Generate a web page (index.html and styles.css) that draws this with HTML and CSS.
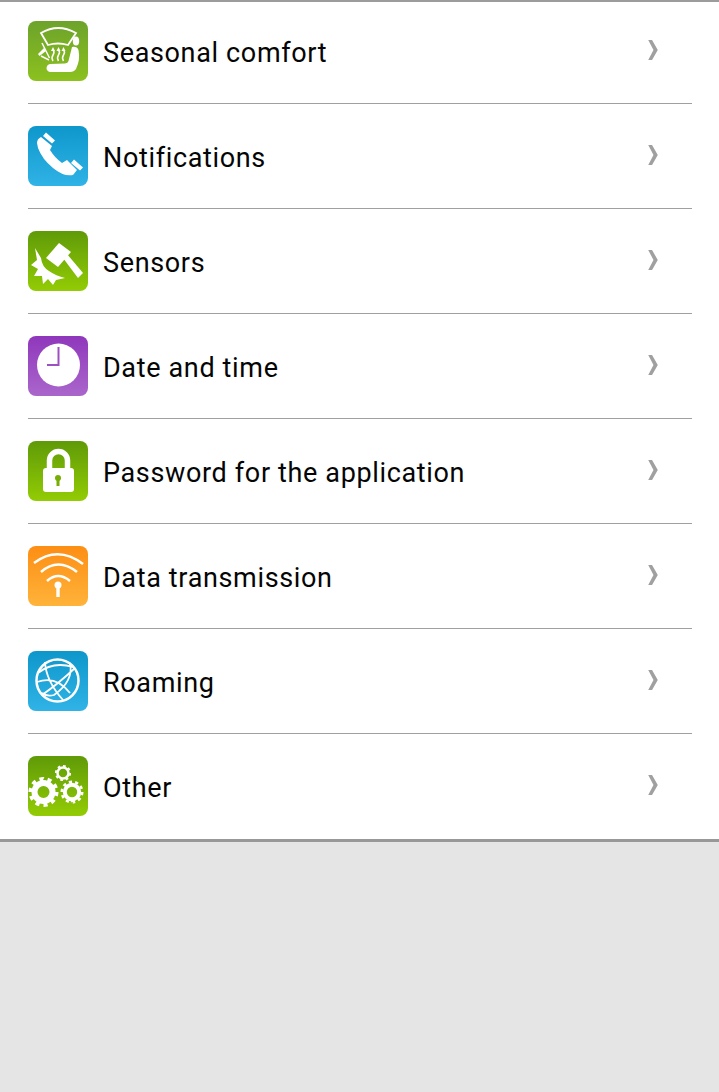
FILE: index.html
```html
<!DOCTYPE html>
<html lang="en">
<head>
<meta charset="utf-8">
<title>Settings</title>
<link rel="stylesheet" href="styles.css">
</head>
<body>
<ul class="menu">
  <li class="row">
    <span class="tile tile-green">
      <svg viewBox="0 0 60 60" class="icon">
        <path class="line-slim" d="M13 12Q30 2 48 12L40 24Q30 21 20 24Z"/>
        <ellipse class="fill" cx="48" cy="20" rx="3.200" ry="4.500"/>
        <path class="fill" d="M44 26Q49 25 50.500 29Q52.500 39 48 48Q46 51 42 51L22 51Q18.500 50 18.500 47Q19 43.500 22 43L37 42.500Q40 42 40.500 40Z"/>
        <path class="thin" d="M14 22L21.500 37M13 35L21 39"/>
        <path class="fill" d="M10 33L16 27L18 30L11.500 35Z"/>
        <path class="thin" d="M25 40Q23 37 25 34T25 29M30.500 40Q28.500 37 30.500 34T30.500 29M35.500 40Q33.500 37 35.500 34T35.500 29"/>
        <path class="fill" d="M23 30L25 26L27 30ZM28.500 30L30.500 26L32.500 30ZM33.500 30L35.500 26L37.500 30Z"/>
      </svg>
    </span>
    <span class="label">Seasonal comfort</span>
    <svg viewBox="0 0 12 22" class="chevron"><path d="M1 0H5L11 10.500L5 21H1L6.500 10.500Z"/></svg>
  </li>
  <li class="row">
    <span class="tile tile-blue">
      <svg viewBox="0 0 60 60" class="icon">
        <path class="fill" d="M9 17Q9 13 13 11L24 20L22 24Q27 32 34 37L39 34L49 44L45 49Q36 51 25 42Q14 33 10 22Z"/>
        <path class="fill" d="M15 10L18 6.500L27 14.500L24 17.500ZM43 37L46 33.500L55 41.500L52 44.500Z"/>
      </svg>
    </span>
    <span class="label">Notifications</span>
    <svg viewBox="0 0 12 22" class="chevron"><path d="M1 0H5L11 10.500L5 21H1L6.500 10.500Z"/></svg>
  </li>
  <li class="row">
    <span class="tile tile-lime">
      <svg viewBox="0 0 60 60" class="icon">
        <path class="fill" d="M31 12L43 21L30 36L18 27Z"/>
        <path class="fill" d="M35 27L39 23L55 42L50 47Z"/>
        <path class="fill" d="M7 17L13 27Q14 36 21 40Q28 45 37 47L28 49L25 54L20 48L15 53L14 45L6 45L10 38L3 34L9 29Z"/>
      </svg>
    </span>
    <span class="label">Sensors</span>
    <svg viewBox="0 0 12 22" class="chevron"><path d="M1 0H5L11 10.500L5 21H1L6.500 10.500Z"/></svg>
  </li>
  <li class="row">
    <span class="tile tile-purple">
      <svg viewBox="0 0 60 60" class="icon">
        <circle class="fill" cx="30.500" cy="29" r="21.500"/>
        <path class="hand" d="M30.500 11V29H19"/>
      </svg>
    </span>
    <span class="label">Date and time</span>
    <svg viewBox="0 0 12 22" class="chevron"><path d="M1 0H5L11 10.500L5 21H1L6.500 10.500Z"/></svg>
  </li>
  <li class="row">
    <span class="tile tile-lime">
      <svg viewBox="0 0 60 60" class="icon">
        <path class="shackle" d="M21.500 28V19.500a9 9 0 0 1 18 0V28"/>
        <rect class="fill" x="15" y="27" width="31" height="24" rx="3"/>
        <circle class="hole-lime" cx="30" cy="37" r="3"/>
        <rect class="hole-lime" x="28.500" y="37" width="3" height="8"/>
      </svg>
    </span>
    <span class="label">Password for the application</span>
    <svg viewBox="0 0 12 22" class="chevron"><path d="M1 0H5L11 10.500L5 21H1L6.500 10.500Z"/></svg>
  </li>
  <li class="row">
    <span class="tile tile-orange">
      <svg viewBox="0 0 60 60" class="icon">
        <path class="line" d="M6 17Q30 -1 55 18M13 26Q30 11 49 26M19 35Q30 25 42 35"/>
        <circle class="fill" cx="30" cy="39" r="3.500"/>
        <rect class="fill" x="28.300" y="39" width="3.400" height="12"/>
      </svg>
    </span>
    <span class="label">Data transmission</span>
    <svg viewBox="0 0 12 22" class="chevron"><path d="M1 0H5L11 10.500L5 21H1L6.500 10.500Z"/></svg>
  </li>
  <li class="row">
    <span class="tile tile-blue">
      <svg viewBox="0 0 60 60" class="icon">
        <circle class="line" cx="29.500" cy="29.500" r="21"/>
        <path class="line-slim" d="M42 12Q46 30 26 44Q19 46 14 42M10 22Q25 10 45 16M17 11Q18 30 35 49M9 31Q28 24 42 42M14 44Q30 33 47 17"/>
      </svg>
    </span>
    <span class="label">Roaming</span>
    <svg viewBox="0 0 12 22" class="chevron"><path d="M1 0H5L11 10.500L5 21H1L6.500 10.500Z"/></svg>
  </li>
  <li class="row">
    <span class="tile tile-lime">
      <svg viewBox="0 0 60 60" class="icon">
        <circle class="ring ring-big" cx="15.500" cy="36" r="9"/>
        <circle class="teeth teeth-big" cx="15.500" cy="36" r="13" pathLength="20"/>
        <circle class="ring ring-mid" cx="44" cy="36" r="7.200"/>
        <circle class="teeth teeth-mid" cx="44" cy="36" r="10.200" pathLength="20"/>
        <circle class="ring ring-small" cx="35" cy="17" r="5.500"/>
        <circle class="teeth teeth-small" cx="35" cy="17" r="7.200" pathLength="16"/>
      </svg>
    </span>
    <span class="label">Other</span>
    <svg viewBox="0 0 12 22" class="chevron"><path d="M1 0H5L11 10.500L5 21H1L6.500 10.500Z"/></svg>
  </li>
</ul>
</body>
</html>
```
FILE: styles.css
```css
* { box-sizing: border-box; }

html, body {
  margin: 0;
  height: 100%;
}

body {
  background: #e5e5e5;
  font-family: Roboto, "Liberation Sans", sans-serif;
  color: #050505;
}

.menu {
  list-style: none;
  margin: 0;
  padding: 0;
  background: #fff;
  border-top: 2px solid #9c9c9c;
  border-bottom: 3px solid #989898;
}

.row {
  display: flex;
  align-items: center;
  height: 105px;
  margin: 0 27px 0 28px;
  padding-right: 33px;
  border-bottom: 1px solid #a0a0a0;
}

.row:first-child { height: 102px; }

.row:first-child .tile { margin-top: -3px; }

.row:first-child .label { margin-top: 1px; }

.row:first-child .chevron { margin-top: -5px; }

.row:last-child { border-bottom-color: transparent; }

.tile {
  flex: none;
  width: 60px;
  height: 60px;
  border-radius: 8px;
  overflow: hidden;
}

.tile-green  { background: linear-gradient(#6da32b, #8cc11f); }
.tile-blue   { background: linear-gradient(#0e97cb, #30b3e6); }
.tile-lime   { background: linear-gradient(#5f9a08, #93cc04); }
.tile-purple { background: linear-gradient(#8f37bc, #aa66cb); }
.tile-orange { background: linear-gradient(#fd8e14, #ffb33a); }

.icon {
  display: block;
  width: 60px;
  height: 60px;
}

.fill { fill: #fff; }

.line {
  fill: none;
  stroke: #fff;
  stroke-width: 2.5;
}

.line-slim {
  fill: none;
  stroke: #fff;
  stroke-width: 1.800;
}

.thin {
  fill: none;
  stroke: #fff;
  stroke-width: 1.500;
}

.hand {
  fill: none;
  stroke: #9d50c0;
  stroke-width: 2;
}

.shackle {
  fill: none;
  stroke: #fff;
  stroke-width: 5.500;
}

.hole-lime { fill: #77ae06; }

.ring { fill: none; stroke: #fff; }
.ring-big { stroke-width: 6; }
.ring-mid { stroke-width: 4; }
.ring-small { stroke-width: 2.500; }

.teeth {
  fill: none;
  stroke: #fff;
  stroke-dasharray: 1 1;
}
.teeth-big { stroke-width: 4; }
.teeth-mid { stroke-width: 2.600; }
.teeth-small { stroke-width: 1.800; }

.label {
  flex: 1;
  margin-left: 15px;
  margin-top: 3px;
  font-size: 27px;
  line-height: 32px;
  letter-spacing: 0.65px;
}

.chevron {
  flex: none;
  width: 12px;
  height: 21px;
  margin-top: -1px;
  fill: #a0a0a0;
}
```
